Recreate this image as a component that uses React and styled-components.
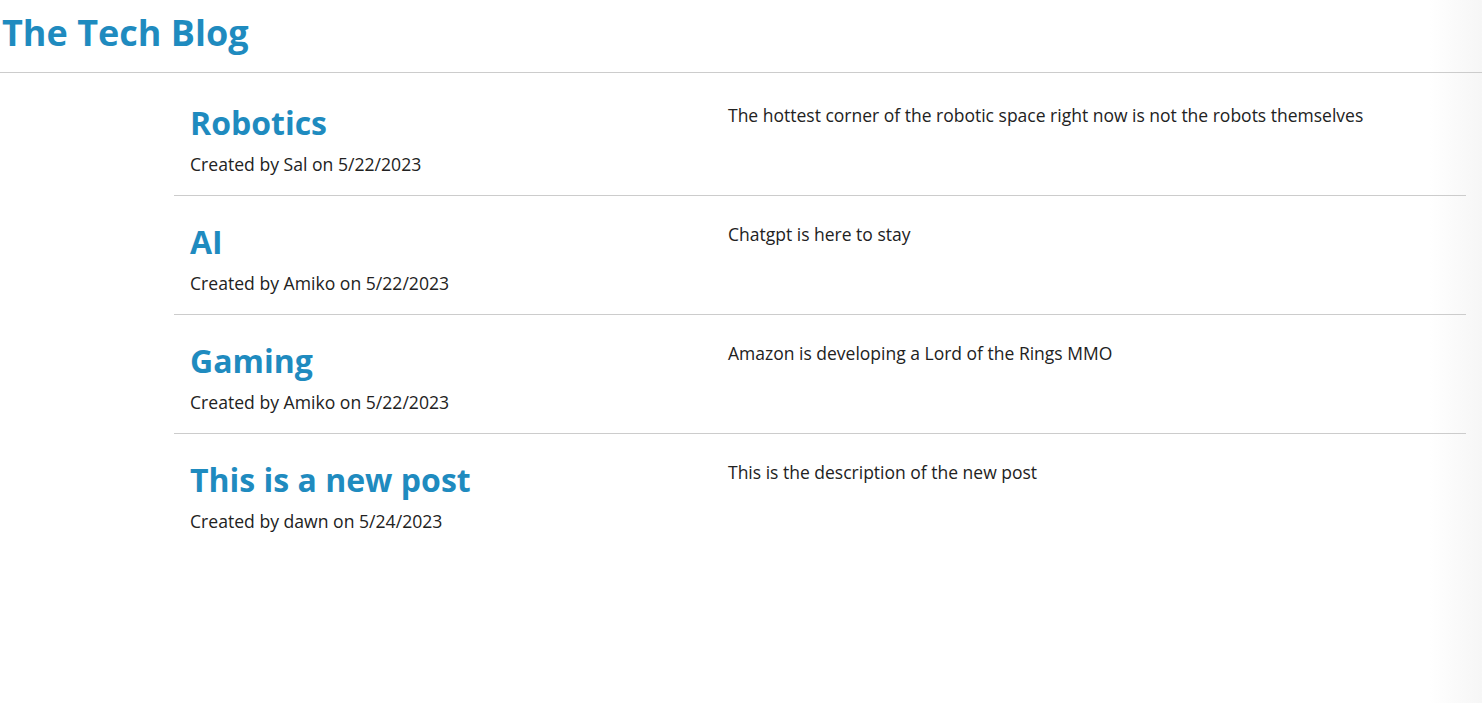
import React from "react";
import styled, { createGlobalStyle } from "styled-components";

const GlobalStyle = createGlobalStyle`
  html, body {
    margin: 0;
    padding: 0;
  }
  body {
    font-family: "Open Sans", "Noto Sans", sans-serif;
    color: #222;
    min-height: 100vh;
    background: linear-gradient(to right, #fff 0, #fff 1430px, #f6f6f6 100%);
  }
`;

const Header = styled.header`
  height: 72px;
  border-bottom: 1px solid #ccc;
  display: flex;
  align-items: center;
`;

const Brand = styled.h1`
  margin: 0 0 7px 2px;
  font-size: 36px;
  font-weight: 700;
  color: #1f8bbf;
`;

const PostList = styled.main`
  margin: 4px 16px 0 174px;
`;

const PostRow = styled.article`
  display: grid;
  grid-template-columns: 554px 1fr;
  height: 119px;
  border-bottom: ${props => (props.last ? "none" : "1px solid #ccc")};
  box-sizing: border-box;
`;

const Left = styled.div`
  padding: 25px 16px 10px;
`;

const Title = styled.h2`
  margin: 0;
  font-size: 32px;
  font-weight: 700;
  color: #1f8bbf;
  line-height: 42px;
`;

const Meta = styled.p`
  margin: 8px 0 0;
  font-size: 17.6px;
  line-height: 24px;
`;

const Description = styled.p`
  margin: 26px 0 0;
  font-size: 17.5px;
  line-height: 24px;
`;

const posts = [
  { title: "Robotics", author: "Sal", date: "5/22/2023", body: "The hottest corner of the robotic space right now is not the robots themselves" },
  { title: "AI", author: "Amiko", date: "5/22/2023", body: "Chatgpt is here to stay" },
  { title: "Gaming", author: "Amiko", date: "5/22/2023", body: "Amazon is developing a Lord of the Rings MMO" },
  { title: "This is a new post", author: "dawn", date: "5/24/2023", body: "This is the description of the new post" }
];

const App = () => {
  return (
    <>
      <GlobalStyle />
      <Header>
        <Brand>The Tech Blog</Brand>
      </Header>
      <PostList>
        {posts.map((p, i) => (
          <PostRow key={p.title} last={i === posts.length - 1}>
            <Left>
              <Title>{p.title}</Title>
              <Meta>Created by {p.author} on {p.date}</Meta>
            </Left>
            <Description>{p.body}</Description>
          </PostRow>
        ))}
      </PostList>
    </>
  );
};

export default App;
